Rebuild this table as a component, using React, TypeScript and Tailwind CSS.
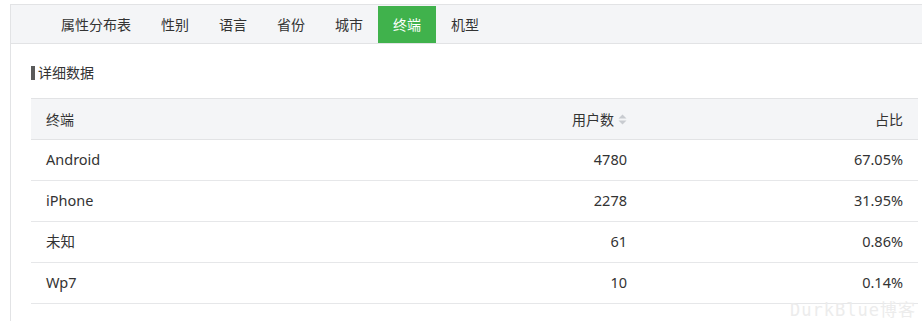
import React from "react";

const tabs = ["属性分布表", "性别", "语言", "省份", "城市", "终端", "机型"];
const rows = [
  { name: "Android", users: "4780", pct: "67.05%" },
  { name: "iPhone", users: "2278", pct: "31.95%" },
  { name: "未知", users: "61", pct: "0.86%" },
  { name: "Wp7", users: "10", pct: "0.14%" },
];

function SortIcon() {
  return (
    <svg width="9" height="11" viewBox="0 0 9 11" className="ml-[4px]">
      <path d="M4.5 0.5 L8.5 4.5 L0.5 4.5 Z" fill="#c8cbd0" />
      <path d="M4.5 10.5 L8.5 6.5 L0.5 6.5 Z" fill="#c8cbd0" />
    </svg>
  );
}

export default function App() {
  return (
    <div
      className="relative w-[922px] h-[321px] overflow-hidden bg-white pt-[4px] pl-[10px] text-[14px] text-[#333]"
      style={{ fontFamily: '"Noto Sans", "Noto Sans CJK SC", sans-serif' }}
    >
      <div className="h-full border-l border-t border-[#e2e3e5]">
        <div className="flex h-[39px] items-stretch border-b border-[#e2e3e5] bg-[#f4f5f7] pl-[35px]">
          {tabs.map((t) => (
            <div
              key={t}
              className={
                t === "终端"
                  ? "mt-[1px] flex items-center bg-[#40b24c] px-[15px] text-white"
                  : "flex items-center px-[15px] text-[#333]"
              }
            >
              {t}
            </div>
          ))}
        </div>
        <div className="pl-[20px] pr-[4px]">
          <div className="mt-[20px] flex h-[17px] items-center">
            <span className="mr-[3px] h-[14px] w-[4px] bg-[#5a5a5a]" />
            <span className="leading-none">详细数据</span>
          </div>
          <div className="mt-[17px] border-t border-[#e2e3e5]">
            <div className="grid h-[41px] grid-cols-[1fr_276px_276px] items-center border-b border-[#e2e3e5] bg-[#f4f5f7] px-[15px]">
              <div>终端</div>
              <div className="flex items-center justify-end">
                <span>用户数</span>
                <SortIcon />
              </div>
              <div className="text-right">占比</div>
            </div>
            {rows.map((r) => (
              <div
                key={r.name}
                className="grid h-[41px] grid-cols-[1fr_276px_276px] items-center border-b border-[#e6e7e9] px-[15px] text-[14.5px]"
              >
                <div>{r.name}</div>
                <div className="text-right">{r.users}</div>
                <div className="text-right">{r.pct}</div>
              </div>
            ))}
          </div>
        </div>
      </div>
      <div
        className="absolute bottom-[-2px] right-[6px] text-[17px] tracking-[1px] text-[#ececec]"
        style={{ fontFamily: '"DejaVu Sans Mono", "Noto Sans CJK SC", monospace' }}
      >
        DurkBlue博客
      </div>
    </div>
  );
}
